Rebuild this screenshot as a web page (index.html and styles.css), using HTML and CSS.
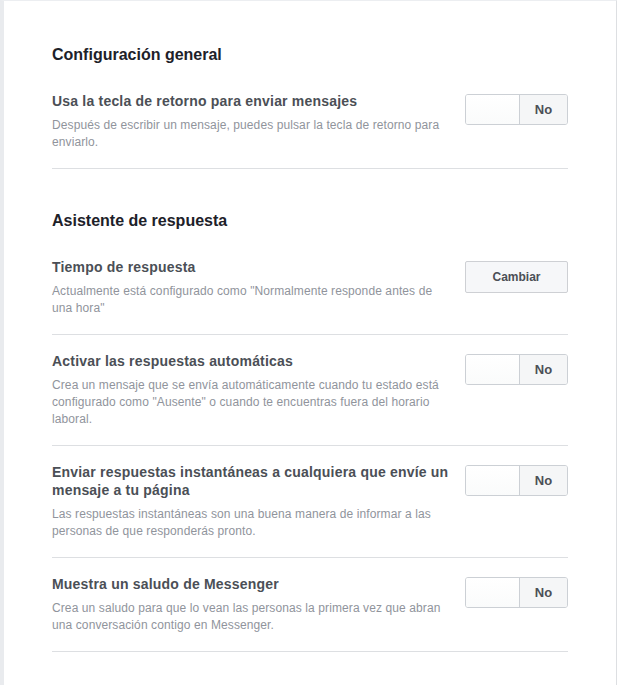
FILE: index.html
```html
<!DOCTYPE html>
<html lang="es">
<head>
    <meta charset="UTF-8">
    <meta name="viewport" content="width=device-width, initial-scale=1.0">
    <title>Configuración de mensajes</title>
    <link rel="stylesheet" href="styles.css">
</head>
<body>
    <div class="page">
        <div class="section">
            <h2 class="section-title">Configuración general</h2>
            <div class="row">
                <div class="text">
                    <div class="title">Usa la tecla de retorno para enviar mensajes</div>
                    <div class="desc">Después de escribir un mensaje, puedes pulsar la tecla de retorno para enviarlo.</div>
                </div>
                <div class="toggle"><span class="off"></span><span class="label">No</span></div>
            </div>
        </div>

        <div class="section">
            <h2 class="section-title">Asistente de respuesta</h2>
            <div class="row">
                <div class="text">
                    <div class="title">Tiempo de respuesta</div>
                    <div class="desc">Actualmente está configurado como "Normalmente responde antes de una hora"</div>
                </div>
                <button class="btn">Cambiar</button>
            </div>
            <div class="row">
                <div class="text">
                    <div class="title">Activar las respuestas automáticas</div>
                    <div class="desc">Crea un mensaje que se envía automáticamente cuando tu estado está configurado como "Ausente" o cuando te encuentras fuera del horario laboral.</div>
                </div>
                <div class="toggle"><span class="off"></span><span class="label">No</span></div>
            </div>
            <div class="row">
                <div class="text">
                    <div class="title">Enviar respuestas instantáneas a cualquiera que envíe un mensaje a tu página</div>
                    <div class="desc">Las respuestas instantáneas son una buena manera de informar a las personas de que responderás pronto.</div>
                </div>
                <div class="toggle"><span class="off"></span><span class="label">No</span></div>
            </div>
            <div class="row">
                <div class="text">
                    <div class="title">Muestra un saludo de Messenger</div>
                    <div class="desc">Crea un saludo para que lo vean las personas la primera vez que abran una conversación contigo en Messenger.</div>
                </div>
                <div class="toggle"><span class="off"></span><span class="label">No</span></div>
            </div>
        </div>
    </div>
</body>
</html>
```

FILE: styles.css
```css
* {
    margin: 0;
    padding: 0;
    box-sizing: border-box;
}

body {
    font-family: "Liberation Sans", Arial, sans-serif;
    background-color: #ffffff;
}

.page {
    min-height: 685px;
    border-left: 4px solid #e9ebee;
    border-top: 1px solid #eceef1;
    border-right: 1px solid #dddfe2;
    padding: 0 48px;
}

.section {
    padding-top: 44px;
}

.section + .section {
    padding-top: 42px;
}

.section-title {
    font-size: 16px;
    font-weight: bold;
    line-height: 20px;
    color: #1d2129;
    margin-bottom: 10px;
}

.row {
    display: flex;
    justify-content: space-between;
    align-items: flex-start;
    padding: 17px 0;
    border-bottom: 1px solid #dddfe2;
}

.text {
    width: 400px;
}

.title {
    font-size: 14px;
    font-weight: bold;
    line-height: 18px;
    color: #4b4f56;
    letter-spacing: 0.2px;
}

.desc {
    margin-top: 7px;
    font-size: 12px;
    line-height: 17px;
    color: #90949c;
    letter-spacing: 0.1px;
}

.toggle {
    display: flex;
    width: 103px;
    height: 31px;
    margin-top: 2px;
    border: 1px solid #ccd0d5;
    border-radius: 3px;
    overflow: hidden;
}

.toggle .off {
    width: 53px;
    background: linear-gradient(#ffffff, #fafbfb);
}

.toggle .label {
    flex: 1;
    border-left: 1px solid #ccd0d5;
    background: #f5f6f7;
    font-size: 13px;
    font-weight: bold;
    color: #4b4f56;
    display: flex;
    align-items: center;
    justify-content: center;
}

.btn {
    width: 103px;
    height: 32px;
    margin-top: 3px;
    border: 1px solid #ced0d4;
    border-radius: 2px;
    background: #f6f7f9;
    font-family: "Liberation Sans", Arial, sans-serif;
    font-size: 12px;
    font-weight: bold;
    color: #4b4f56;
}
```
